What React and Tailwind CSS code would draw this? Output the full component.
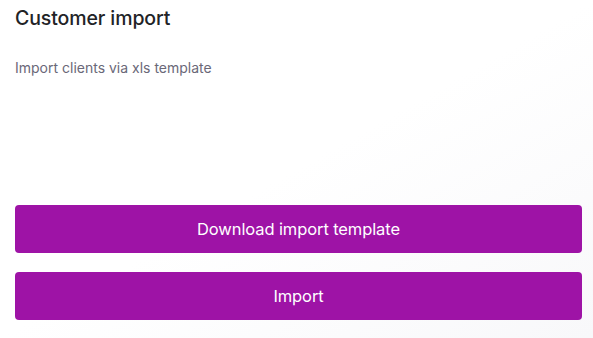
export default function App() {
  return (
    <div
      className="w-[593px] h-[338px] bg-gradient-to-br from-white via-white to-[#f8f8fa] overflow-hidden"
      style={{ fontFamily: "Inter, 'Noto Sans', sans-serif" }}
    >
      <div className="pl-[15px] pt-[6px] w-[582px] flex flex-col">
        <h1 className="text-[19.5px] leading-[24px] font-medium text-[#222326] tracking-[-0.1px]">Customer import</h1>
        <p className="mt-[28px] text-[14px] leading-[20px] text-[#6a6878]">Import clients via xls template</p>
        <button className="mt-[127px] h-[48px] w-full rounded-[4px] bg-[#9e13a6] text-white text-[16.5px] tracking-[-0.1px]">
          Download import template
        </button>
        <button className="mt-[19px] h-[48px] w-full rounded-[4px] bg-[#9e13a6] text-white text-[16.5px] tracking-[-0.1px]">
          Import
        </button>
      </div>
    </div>
  );
}
